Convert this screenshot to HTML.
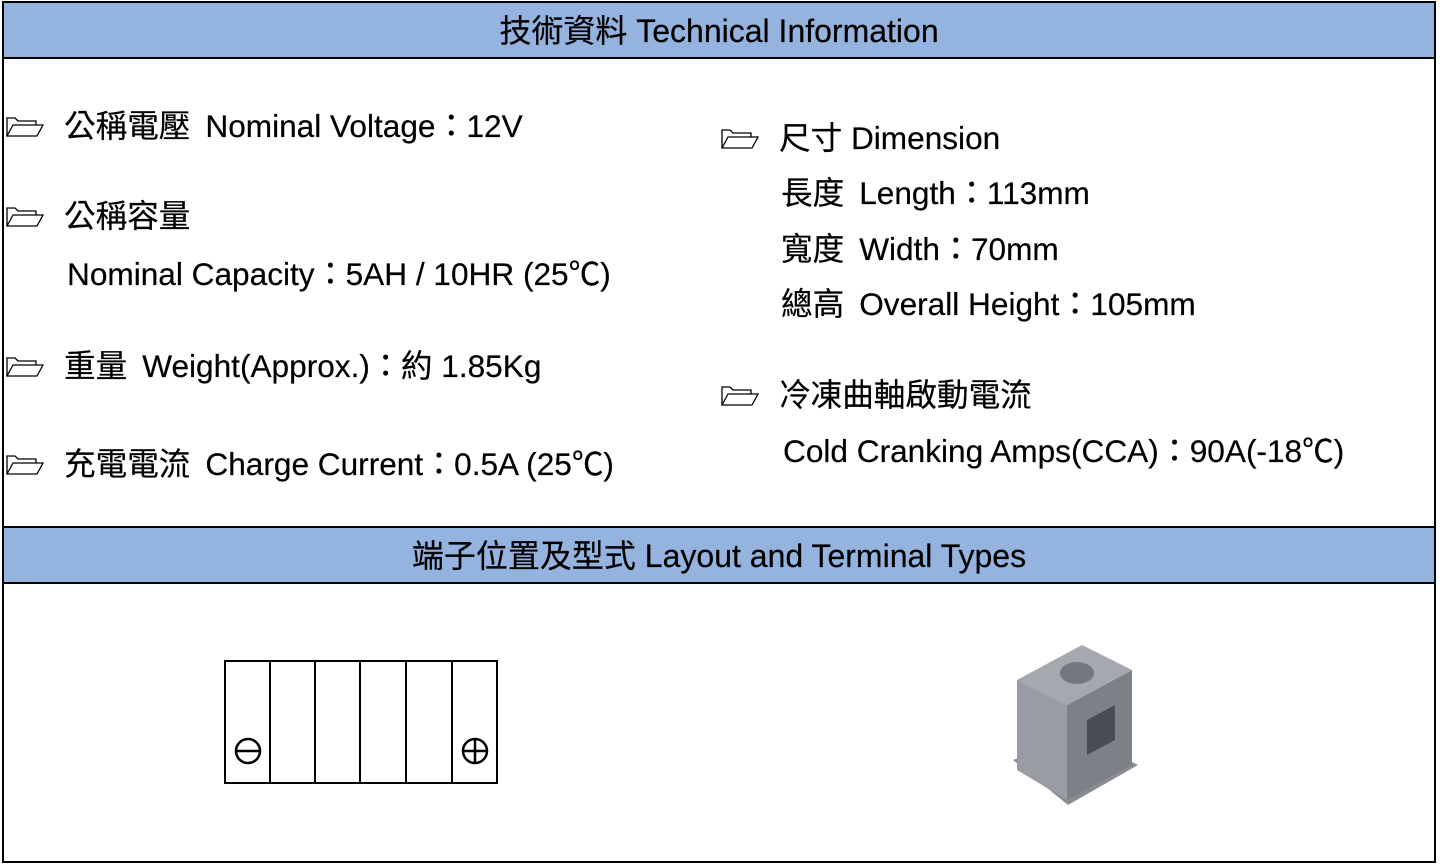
<!DOCTYPE html>
<html><head><meta charset="utf-8"><style>
body{margin:0;width:1440px;height:864px;background:#fff;position:relative;overflow:hidden;font-family:"Liberation Sans","Noto Sans CJK TC",sans-serif;color:#000}
.box{position:absolute;left:2px;top:1px;width:1430px;height:858px;border:2px solid #000}
.hd{position:absolute;left:4px;width:1430px;height:54px;background:#95b3df;border-top:2px solid #000;border-bottom:2px solid #000;text-align:center;font-size:32px;line-height:56px;-webkit-text-stroke:0.2px #000}
.t{position:absolute;font-size:31.6px;line-height:30px;white-space:nowrap;-webkit-text-stroke:0.2px #000}
.c{display:inline-block;width:31px;text-align:center}
.g{margin-left:15px}
.f{position:absolute;width:38px;height:24px}
</style></head><body>
<div class="box"></div>
<div class="hd" style="top:1px">技術資料 Technical Information</div>
<div class="hd" style="top:526px">端子位置及型式 Layout and Terminal Types</div>

<svg class="f" style="left:6px;top:114px" viewBox="0 0 38 24"><path d="M1 22V4h8l3 3h18v4M1 22l6-11h30l-6 11z" fill="none" stroke="#000" stroke-width="1.3"/></svg>
<svg class="f" style="left:6px;top:204px" viewBox="0 0 38 24"><path d="M1 22V4h8l3 3h18v4M1 22l6-11h30l-6 11z" fill="none" stroke="#000" stroke-width="1.3"/></svg>
<svg class="f" style="left:6px;top:354px" viewBox="0 0 38 24"><path d="M1 22V4h8l3 3h18v4M1 22l6-11h30l-6 11z" fill="none" stroke="#000" stroke-width="1.3"/></svg>
<svg class="f" style="left:6px;top:452px" viewBox="0 0 38 24"><path d="M1 22V4h8l3 3h18v4M1 22l6-11h30l-6 11z" fill="none" stroke="#000" stroke-width="1.3"/></svg>
<svg class="f" style="left:721px;top:126px" viewBox="0 0 38 24"><path d="M1 22V4h8l3 3h18v4M1 22l6-11h30l-6 11z" fill="none" stroke="#000" stroke-width="1.3"/></svg>
<svg class="f" style="left:721px;top:383px" viewBox="0 0 38 24"><path d="M1 22V4h8l3 3h18v4M1 22l6-11h30l-6 11z" fill="none" stroke="#000" stroke-width="1.3"/></svg>

<div class="t" style="left:64px;top:111px">公稱電壓<span class="g">Nominal Voltage</span><span class="c">：</span>12V</div>
<div class="t" style="left:64px;top:201px">公稱容量</div>
<div class="t" style="left:67px;top:259px">Nominal Capacity<span class="c">：</span>5AH / 10HR (25℃)</div>
<div class="t" style="left:64px;top:351px">重量<span class="g">Weight(Approx.)</span><span class="c">：</span>約 1.85Kg</div>
<div class="t" style="left:64px;top:449px">充電電流<span class="g">Charge Current</span><span class="c">：</span>0.5A (25℃)</div>

<div class="t" style="left:779px;top:123px">尺寸 Dimension</div>
<div class="t" style="left:781px;top:178px">長度<span class="g">Length</span><span class="c">：</span>113mm</div>
<div class="t" style="left:781px;top:234px">寬度<span class="g">Width</span><span class="c">：</span>70mm</div>
<div class="t" style="left:781px;top:289px">總高<span class="g">Overall Height</span><span class="c">：</span>105mm</div>
<div class="t" style="left:779px;top:380px">冷凍曲軸啟動電流</div>
<div class="t" style="left:783px;top:436px">Cold Cranking Amps(CCA)<span class="c">：</span>90A(-18℃)</div>

<svg style="position:absolute;left:224px;top:660px" width="274" height="124" viewBox="0 0 274 124">
<rect x="1" y="1" width="272" height="122" fill="none" stroke="#000" stroke-width="2"/>
<path d="M46 1v122M91 1v122M136 1v122M182 1v122M228 1v122" stroke="#000" stroke-width="2"/>
<circle cx="24" cy="91" r="12" fill="none" stroke="#000" stroke-width="2.5"/><path d="M13 91h22" stroke="#000" stroke-width="2.5"/>
<circle cx="251" cy="91" r="12" fill="none" stroke="#000" stroke-width="2.5"/><path d="M239 91h24M251 79v24" stroke="#000" stroke-width="2.5"/>
</svg>

<svg style="position:absolute;left:1005px;top:640px" width="140" height="170" viewBox="0 0 140 170">
<path d="M8 120l55 45 70-40-60-30z" fill="#8a8c94"/>
<path d="M12 40l50 25v95l-50-30z" fill="#9a9ca4"/>
<path d="M62 65l65-35v95l-65 35z" fill="#7e8088"/>
<path d="M12 40l65-35 50 25-65 35z" fill="#a6a8b0"/>
<ellipse cx="72" cy="33" rx="17" ry="11" fill="#75777f"/>
<path d="M82 80l28-15v35l-28 15z" fill="#4a4c54"/>
</svg>
</body></html>
